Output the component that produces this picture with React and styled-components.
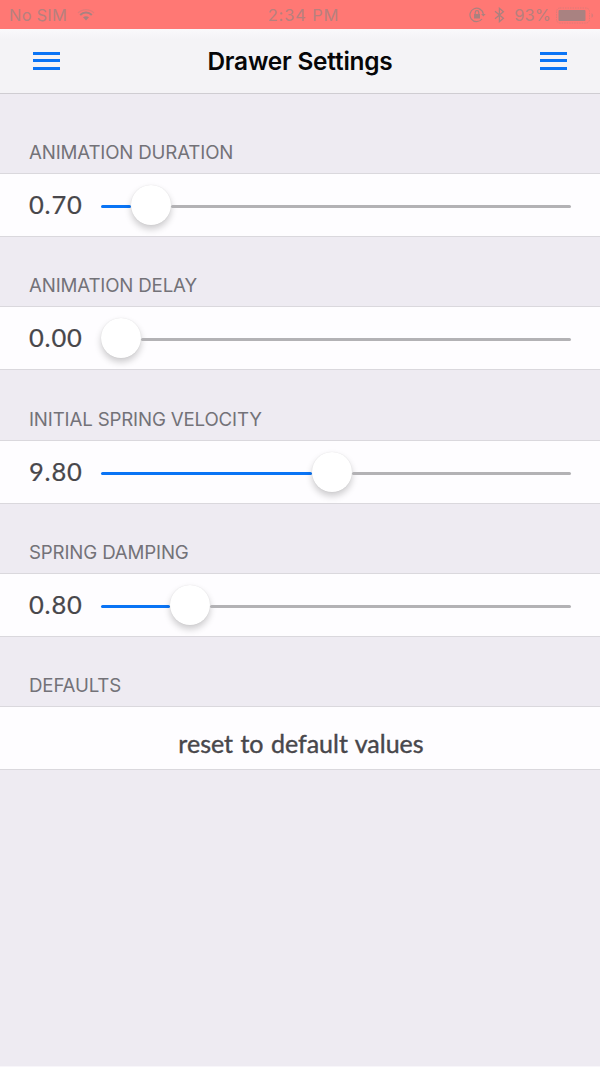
import React from "react";
import styled, { createGlobalStyle } from "styled-components";

const Global = createGlobalStyle`
  * { box-sizing: border-box; }
  body { margin: 0; background: #efecf3; }
`;

const Screen = styled.main`
  width: 600px;
  height: 1067px;
  overflow: hidden;
  background: #eeebf2;
  border-bottom: 1px solid #f8f6fa;
  font-family: Inter, "Liberation Sans", sans-serif;
`;

const StatusBar = styled.header`
  height: 29px;
  padding: 1px 6px 0 9px;
  display: grid;
  grid-template-columns: 1fr auto 1fr;
  align-items: center;
  background: #ff7874;
  color: #b7807e;
  font-size: 16.5px;
  line-height: 28px;
`;

const StatusGroup = styled.div`
  display: flex;
  align-items: center;
  justify-content: ${(p) => (p.$end ? "flex-end" : "flex-start")};
`;

const Carrier = styled.span`
  letter-spacing: 0.2px;
  margin-right: 10px;
`;

const Clock = styled.span`
  letter-spacing: 0.85px;
  padding-left: 4px;
`;

const Battery = styled.span`
  margin: 0 5px 0 9px;
  letter-spacing: 0;
`;

const NavBar = styled.nav`
  height: 65px;
  padding: 0 33px;
  display: flex;
  align-items: center;
  justify-content: space-between;
  background: linear-gradient(#faf9fb, #f4f3f6 10px);
  border-bottom: 1px solid #cfcdd2;
`;

const MenuButton = styled.button`
  width: 27px;
  height: 18px;
  padding: 0;
  border: 0;
  background: none;
  display: flex;
  flex-direction: column;
  justify-content: space-between;
  margin-bottom: 1px;
`;

const MenuBar = styled.span`
  height: 3px;
  width: 27px;
  background: #0a74f5;
`;

const Title = styled.h1`
  margin: 0;
  font-size: 24.4px;
  line-height: 30px;
  font-weight: 600;
  letter-spacing: -0.2px;
  color: #060608;
`;

const SectionTitle = styled.h2`
  margin: 0;
  height: ${(p) => (p.$first ? 79 : 69.33)}px;
  padding: 0 29px 8px;
  display: flex;
  align-items: flex-end;
  font-size: 18.7px;
  line-height: 24px;
  font-weight: 400;
  letter-spacing: -0.16px;
  color: #737278;
`;

const Row = styled.div`
  height: 64px;
  padding: 0 29px;
  display: flex;
  align-items: center;
  justify-content: ${(p) => (p.$centered ? "center" : "flex-start")};
  background: #fefdff;
  border-top: 1px solid #dad8dd;
  border-bottom: 1px solid #dad8dd;
`;

const Value = styled.output`
  width: 72px;
  padding-bottom: 2px;
  font-family: Lato, sans-serif;
  font-size: 25.5px;
  line-height: 32px;
  letter-spacing: 0.8px;
  color: #48474b;
  -webkit-text-stroke: 0.2px #48474b;
`;

const Slider = styled.div`
  flex: 1;
  height: 40px;
  display: flex;
  align-items: center;
`;

const Track = styled.span`
  height: 3px;
  margin-top: 3px;
  border-radius: 2px;
  background: ${(p) => (p.$filled ? "#0a74f5" : "#b3b2b5")};
  ${(p) => (p.$filled ? `width: ${p.$width}px;` : "flex: 1;")}
`;

const Thumb = styled.span`
  width: 40px;
  height: 40px;
  border-radius: 50%;
  background: #fff;
  box-shadow: 0 0 1px rgba(0, 0, 0, 0.12), 0 4px 7px rgba(0, 0, 0, 0.2);
`;

const ResetButton = styled.button`
  border: 0;
  padding: 9px 0 0 2px;
  background: none;
  font-family: Lato, sans-serif;
  font-size: 25px;
  line-height: 32px;
  word-spacing: 1px;
  color: #48474b;
  -webkit-text-stroke: 0.4px #48474b;
`;

const WifiIcon = () => (
  <svg width="18" height="14" viewBox="0 0 18 14" fill="none" stroke="#a98281">
    <path d="M1 5C5.5 .4 12.5 .4 17 5" strokeWidth="1.2" opacity=".35" />
    <path d="M3.2 7C6.5 3.8 11.5 3.8 14.8 7" strokeWidth="2" />
    <path d="M6 9.3C7.8 8 10.2 8 12 9.3L9 12.6Z" fill="#a98281" stroke="none" />
  </svg>
);

const LockIcon = () => (
  <svg width="17" height="16" viewBox="0 0 17 16" fill="none" stroke="#aa817f" strokeWidth="1.2">
    <path d="M13 12A6.7 6.7 0 1 1 14.3 7" />
    <path d="M12.1 7H16.6L14.4 9.6Z" fill="#aa817f" stroke="none" />
    <rect x="5" y="7" width="6" height="4.5" fill="#aa817f" stroke="none" />
    <path d="M6.2 7V5.4a1.8 1.8 0 0 1 3.6 0V7" />
  </svg>
);

const BluetoothSvg = styled.svg`
  margin-left: 8px;
`;

const BluetoothIcon = () => (
  <BluetoothSvg width="11" height="16" viewBox="0 0 11 16" fill="none" stroke="#aa817f" strokeWidth="1.3">
    <path d="M1 4.2L9.4 11.3L5.4 14.7V1.3L9.4 4.7L1 11.8" />
  </BluetoothSvg>
);

const BatteryIcon = () => (
  <svg width="38" height="17" viewBox="0 0 38 17">
    <rect x=".5" y="1" width="33" height="15" rx="3.5" fill="none" stroke="#dc7b78" strokeDasharray="1.5 1" />
    <rect x="2.5" y="3" width="27" height="11" rx="1" fill="#a98281" />
    <path d="M35.5 6C37.7 7.5 37.7 9.5 35.5 11Z" fill="#d97b78" />
  </svg>
);

const sliders = [
  { title: "ANIMATION DURATION", value: "0.70", fill: 30 },
  { title: "ANIMATION DELAY", value: "0.00", fill: 0 },
  { title: "INITIAL SPRING VELOCITY", value: "9.80", fill: 211 },
  { title: "SPRING DAMPING", value: "0.80", fill: 69 },
];

const Menu = ({ label }) => (
  <MenuButton aria-label={label}>
    <MenuBar />
    <MenuBar />
    <MenuBar />
  </MenuButton>
);

export default function App() {
  return (
    <Screen>
      <Global />
      <StatusBar>
        <StatusGroup>
          <Carrier>No SIM</Carrier>
          <WifiIcon />
        </StatusGroup>
        <Clock>2:34 PM</Clock>
        <StatusGroup $end>
          <LockIcon />
          <BluetoothIcon />
          <Battery>93%</Battery>
          <BatteryIcon />
        </StatusGroup>
      </StatusBar>
      <NavBar>
        <Menu label="Left drawer" />
        <Title>Drawer Settings</Title>
        <Menu label="Right drawer" />
      </NavBar>
      {sliders.map((s, i) => (
        <section key={s.title}>
          <SectionTitle $first={i === 0}>{s.title}</SectionTitle>
          <Row>
            <Value>{s.value}</Value>
            <Slider>
              <Track $filled $width={s.fill} />
              <Thumb />
              <Track />
            </Slider>
          </Row>
        </section>
      ))}
      <section>
        <SectionTitle>DEFAULTS</SectionTitle>
        <Row $centered>
          <ResetButton>reset to default values</ResetButton>
        </Row>
      </section>
    </Screen>
  );
}
